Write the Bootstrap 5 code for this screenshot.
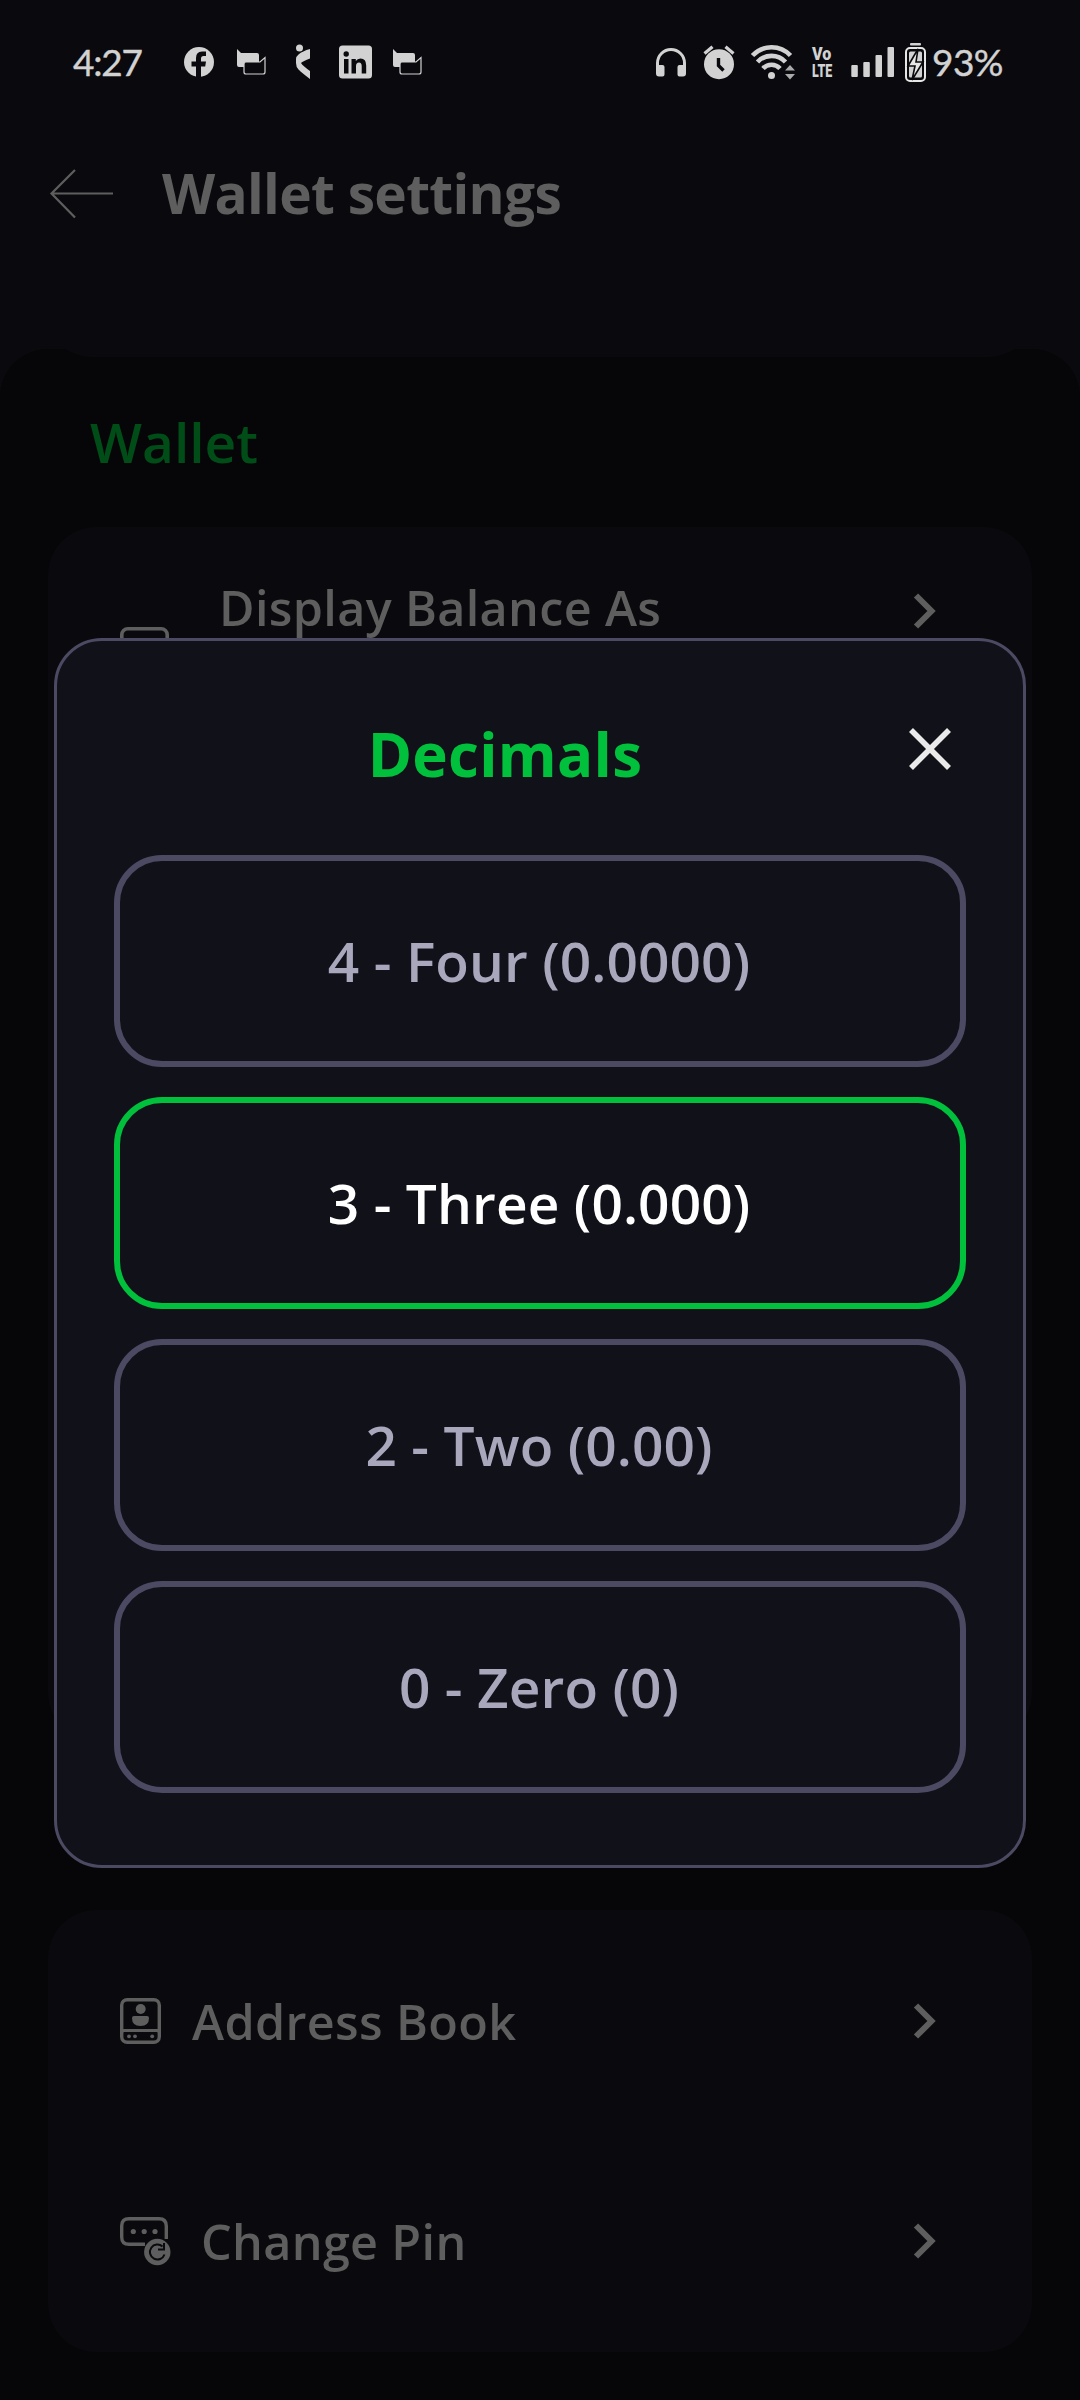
<!DOCTYPE html>
<html lang="en">
<head>
<meta charset="utf-8">
<meta name="viewport" content="width=device-width, initial-scale=1">
<title>Wallet settings</title>
<link href="https://cdn.jsdelivr.net/npm/bootstrap@5.3.0/dist/css/bootstrap.min.css" rel="stylesheet">
<style>
  body { background: #0a0a0e; height: 2400px; overflow: hidden; font-family: "Open Sans", "Noto Sans", sans-serif; color: #5e5e5e; }
  svg { display: block; flex: none; overflow: visible; }
  .statusbar { height: 124px; padding: 0 77px 0 73px; color: #d2d2d2; font-family: Lato, sans-serif; }
  .statusbar svg { fill: currentColor; }
  .clock { font-size: 37px; line-height: 44px; width: 111px; letter-spacing: -1.2px; -webkit-text-stroke: .4px; }
  .charge { font-size: 37px; line-height: 44px; margin-left: 6px; letter-spacing: -.5px; -webkit-text-stroke: .4px; }
  .volte { font: 900 17.500px/16px Roboto, sans-serif; width: 22px; margin-left: 17px; }
  .volte div { transform-origin: 0 50%; width: max-content; }
  .volte-top { transform: scale(.92, 1.05); }
  .volte-bottom { transform: scale(.71, 1.1); }
  .appbar { height: 225px; padding: 32px 50px 0; }
  .appbar-title { font-size: 55px; line-height: 74px; font-weight: 700; margin-left: 49px; letter-spacing: -.7px; }
  .sheet { height: 2051px; background: #060608; border-radius: 48px 48px 0 0; padding: 0 48px; overflow: hidden; }
  .sheet-tab { height: 48px; margin: -40px -4px 48px; background: #0a0a0e; border-radius: 0 0 48px 48px; }
  .section-title { font-size: 55px; line-height: 74px; font-weight: 600; color: #004d18; margin: 0 0 48px 42px; }
  .panel { background: #0a0a0e; border-radius: 48px; padding: 1px 96px 1px 72px; }
  .panel-main { height: 1214px; margin-bottom: 169px; padding-top: 47px; }
  .setting { height: 220px; font-size: 48.5px; line-height: 66px; font-weight: 600; letter-spacing: .35px; }
  .veil { z-index: 5; }
  .picker { max-width: 972px; margin: 638px auto 0; }
  .picker .modal-content { background: #11111a; border: 3px solid #4c4a63; border-radius: 48px; padding: 0 57px 72px; font-family: inherit; }
  .picker-head { height: 214px; }
  .picker-title { font-size: 60px; line-height: 80px; font-weight: 700; color: #00c03c; letter-spacing: .3px; }
  .choice { height: 212px; border: 6px solid #4c4a63; border-radius: 48px; color: #a9a7bc; font-size: 55px; font-weight: 600; letter-spacing: .1px; background: transparent; padding: 0 2px 0 0; }
  .choice.chosen { border-color: #00c03c; color: #fff; }
  .choices { gap: 30px; }
</style>
</head>
<body>
<div class="statusbar d-flex align-items-center">
  <div class="clock">4:27</div>
  <svg width="30" height="32" viewBox="184 46.5 30 32"><circle cx="199" cy="62.5" r="15"/><path d="M196 78V67h-4.500v-5h4.500v-3.500q0-6.500 6-6.500h4v4.500h-2.500q-2.500 0-2.500 2.500v3h5l-.8 5H201v11z" fill="#0a0a0e"/></svg>
  <svg style="margin-left:23px" width="28" height="28" viewBox="237 49 28 28"><path d="M237 50l4 4h16q2 0 2 2v12h-20q-2 0-2-2z"/><path d="M265 58.500v14.500q0 2-2 2h-17q-2 0-2-2v-8q0-2 2-2h14z" fill="#0a0a0e" stroke="#d2d2d2" stroke-width="1.200"/></svg>
  <svg style="margin-left:31px" width="14" height="36" viewBox="296 44 14 36"><circle cx="299.500" cy="48" r="3.500"/><path d="M310 49v9.500q-7 2.500-9 4.500 2 3 9 8v8q-8-6-11.500-9.500-2.500-2.500-2.500-6.500v-4q0-2.500 2.500-4.500 4-3.500 11.500-5.500z"/></svg>
  <svg style="margin-left:29px" width="33" height="34" viewBox="339 45.500 33 34"><rect x="339" y="46" width="33" height="33" rx="3.500"/><g fill="#0a0a0e"><circle cx="346.200" cy="54.500" r="2.700"/><path d="M344 59.500h4.500V74H344zM351.500 59.500h4.300v2q1.500-2.500 4.700-2.500 5.700 0 5.700 7v8h-4.500v-7.500q0-3.500-2.700-3.500-3 0-3 3.500V74h-4.500z"/></g></svg>
  <svg style="margin-left:21px" width="28" height="28" viewBox="237 49 28 28"><path d="M237 50l4 4h16q2 0 2 2v12h-20q-2 0-2-2z"/><path d="M265 58.500v14.500q0 2-2 2h-17q-2 0-2-2v-8q0-2 2-2h14z" fill="#0a0a0e" stroke="#d2d2d2" stroke-width="1.200"/></svg>
  <svg class="ms-auto" width="30" height="30" viewBox="656 46.500 30 30"><path d="M657.500 68v-5.500a13.500 13.500 0 0 1 27 0V68" fill="none" stroke="#d2d2d2" stroke-width="3"/><path d="M656 64.500h6.500q2 0 2 2V74q0 2-2 2H659q-3 0-3-3zM686 64.500h-6.500q-2 0-2 2V74q0 2 2 2h3.500q3 0 3-3z"/></svg>
  <svg style="margin-left:17px" width="32" height="35" viewBox="703 44.500 32 35"><circle cx="719" cy="63.700" r="15"/><path d="M704.500 53l8-6.800M733.500 53l-8-6.800" fill="none" stroke="#d2d2d2" stroke-width="3.200"/><path d="M718.500 57.500v7.500l5 5" fill="none" stroke="#0a0a0e" stroke-width="3.400"/></svg>
  <svg style="margin-left:16px" width="44" height="35" viewBox="751 44 44 35"><g fill="none" stroke="#d2d2d2" stroke-width="4.600"><path d="M752.500 54.500a26 26 0 0 1 38 0"/><path d="M757.500 61a19 19 0 0 1 28 0"/><path d="M763 67.500a11.500 11.500 0 0 1 17 0"/></g><circle cx="771.500" cy="74.500" r="3.500"/><path d="M785 69.500l5-5.500 5 5.500zM785 73l5 5.500 5-5.500z" opacity=".8"/></svg>
  <div class="volte"><div class="volte-top">Vo</div><div class="volte-bottom">LTE</div></div>
  <svg style="margin-left:17px" width="43" height="32" viewBox="851 46 43 32"><rect x="851.300" y="65" width="6.500" height="12" rx="1"/><rect x="863.300" y="62" width="6.500" height="15" rx="1"/><rect x="875.500" y="55" width="6.500" height="22" rx="1"/><rect x="887.500" y="47" width="6.500" height="30" rx="1"/></svg>
  <svg style="margin-left:11px" width="21" height="39" viewBox="905 42 21 39"><rect x="910" y="42" width="11" height="2.500" rx="1"/><rect x="906" y="47" width="19" height="33" rx="4" fill="none" stroke="#e6e6e6" stroke-width="2"/><rect x="909" y="50.500" width="13" height="26" rx="1.500"/><path d="M918 48l-10 17h7l-3 14 11-18h-7z" fill="#e6e6e6" stroke="#0a0a0e" stroke-width="1.600"/></svg>
  <div class="charge">93%</div>
</div>

<header class="appbar d-flex align-items-start">
  <svg width="63" height="50" viewBox="50 169 63 50" style="margin-top:13px" fill="none" stroke="#5e5e5e" stroke-width="2.200"><path d="M75 170L51.500 193.500 75 217.500M51 193.500h62"/></svg>
  <h1 class="appbar-title mb-0">Wallet settings</h1>
</header>

<main class="sheet">
  <div class="sheet-tab"></div>
  <h2 class="section-title">Wallet</h2>
  <section class="panel panel-main">
    <div class="setting d-flex align-items-start">
      <svg width="49" height="40" viewBox="0 0 49 40" style="margin-top:53px"><rect x="1.800" y="1.800" width="45.400" height="36" rx="6" fill="none" stroke="#5e5e5e" stroke-width="3.600"/></svg>
      <span style="margin-left:50px">Display Balance As</span>
      <svg class="ms-auto" style="margin-top:18px" width="24" height="38" viewBox="0 0 24 38"><path d="M4 3.500L19.500 19 4 34.500" fill="none" stroke="#5e5e5e" stroke-width="6"/></svg>
    </div>
  </section>
  <section class="panel">
    <div class="setting d-flex align-items-center">
      <svg width="41" height="46" viewBox="0 0 41 46" fill="#5e5e5e"><rect x="1.700" y="1.700" width="37.600" height="42.600" rx="5.500" fill="none" stroke="#5e5e5e" stroke-width="3.400"/><path d="M3 31h35v3H3z"/><path d="M3 31h5q-5 1-5 5zM38 31h-5q5 1 5 5z"/><circle cx="20.700" cy="11" r="5"/><path d="M12 20q0-2 2-2h13q2 0 2 2 0 8-8.500 8T12 20z"/><circle cx="9" cy="38.300" r="1.900"/><circle cx="15" cy="38.300" r="1.900"/><circle cx="32.200" cy="38.300" r="1.900"/></svg>
      <span style="margin-left:31px">Address Book</span>
      <svg class="ms-auto" width="24" height="38" viewBox="0 0 24 38"><path d="M4 3.500L19.500 19 4 34.500" fill="none" stroke="#5e5e5e" stroke-width="6"/></svg>
    </div>
    <div class="setting d-flex align-items-center">
      <svg width="51" height="49" viewBox="0 0 51 49" fill="#5e5e5e"><path d="M25 27.200H9q-7.300 0-7.300-7.300V9q0-7.300 7.300-7.300h30q7.300 0 7.300 7.300v13" fill="none" stroke="#5e5e5e" stroke-width="3.400"/><circle cx="13.300" cy="14.500" r="2.600"/><circle cx="24.200" cy="14.500" r="2.600"/><circle cx="35" cy="14.500" r="2.600"/><circle cx="37.300" cy="35" r="13.200"/><path d="M44.500 37.500a7.500 7.500 0 1 1-2-8M44 26v6.500h-6" fill="none" stroke="#0a0a0e" stroke-width="2"/></svg>
      <span style="margin-left:30px">Change Pin</span>
      <svg class="ms-auto" width="24" height="38" viewBox="0 0 24 38"><path d="M4 3.500L19.500 19 4 34.500" fill="none" stroke="#5e5e5e" stroke-width="6"/></svg>
    </div>
  </section>
</main>

<div class="modal d-block veil" tabindex="-1" role="dialog">
  <div class="modal-dialog picker">
    <div class="modal-content">
      <div class="picker-head d-flex align-items-start">
        <h2 class="picker-title flex-grow-1 text-center mb-0" style="margin-top:73px">Decimals</h2>
        <svg style="margin:87px 15px 0 13px" width="42" height="42" viewBox="0 0 42 42"><path d="M2 2l38 38M40 2L2 40" stroke="#eaeaea" stroke-width="5.600"/></svg>
      </div>
      <div class="choices d-flex flex-column">
        <button class="choice" type="button">4 - Four (0.0000)</button>
        <button class="choice chosen" type="button">3 - Three (0.000)</button>
        <button class="choice" type="button">2 - Two (0.00)</button>
        <button class="choice" type="button">0 - Zero (0)</button>
      </div>
    </div>
  </div>
</div>
<script src="https://cdn.jsdelivr.net/npm/bootstrap@5.3.0/dist/js/bootstrap.bundle.min.js"></script>
</body>
</html>
